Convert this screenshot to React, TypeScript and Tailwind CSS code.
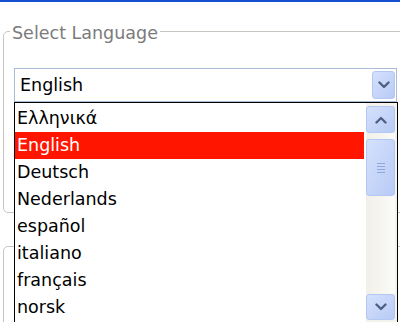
import React from 'react'

const languages = [
  'Ελληνικά',
  'English',
  'Deutsch',
  'Nederlands',
  'español',
  'italiano',
  'français',
  'norsk',
]

function Chevron({ up = false }: { up?: boolean }) {
  return (
    <svg width="12" height="8" viewBox="0 0 12 8" className="block">
      <polyline
        points={up ? '1.5,6.5 6,2 10.5,6.5' : '1.5,1.5 6,6 10.5,1.5'}
        fill="none"
        stroke="#4d6185"
        strokeWidth="2.4"
        strokeLinecap="round"
        strokeLinejoin="round"
      />
    </svg>
  )
}

function ScrollButton({ up = false, className = '' }: { up?: boolean; className?: string }) {
  return (
    <div
      className={`flex items-center justify-center rounded-[3px] border border-[#b3c7f2] bg-gradient-to-br from-[#d5e1fd] to-[#b8cbf5] ${className}`}
    >
      <Chevron up={up} />
    </div>
  )
}

export default function App() {
  return (
    <div className="relative w-[400px] h-[322px] overflow-hidden bg-white font-['DejaVu_Sans',sans-serif] text-[17.5px]">
      {/* window title bar edge */}
      <div className="h-[2px] bg-[#1550d0]" />

      {/* group box */}
      <fieldset className="mt-[17px] ml-[3px] w-[430px] border border-[#c6c6c0] rounded-[5px] pl-[10px] pb-[110px]">
        <legend className="-ml-[4px] px-[2px] pt-[4px] leading-[20px] text-[#7b7b7b]">Select Language</legend>
        <div className="mt-[25px] w-[383px] h-[34px] border border-[#a9bdd6] flex items-center justify-between">
          <span className="pl-[5px] leading-[32px] text-black">English</span>
          <ScrollButton className="w-[23px] h-[28px] mr-[1px]" />
        </div>
      </fieldset>

      <div className="mt-[33px] ml-[3px] w-[430px] h-[120px] border border-[#c6c6c0] rounded-[5px]" />

      {/* open dropdown list */}
      <div className="absolute left-[14px] top-[102px] w-[384px] h-[222px] border border-black bg-white flex">
        <ul className="flex-1 pt-[2px] pr-[2px]">
          {languages.map((lang) => (
            <li
              key={lang}
              className={`h-[27px] pl-[2px] leading-[27px] ${
                lang === 'English' ? 'bg-[#ff1500] text-white' : 'text-black'
              }`}
            >
              {lang}
            </li>
          ))}
        </ul>
        <div className="w-[31px] flex flex-col bg-[#f4f2ec] pr-[2px] pt-[3px] pb-[3px]">
          <ScrollButton up className="h-[27px]" />
          <div className="flex-1 pt-[6px] bg-gradient-to-r from-[#f1efe8] to-[#fbfbf8]">
            <div className="h-[57px] rounded-[3px] border border-[#b3c7f2] bg-gradient-to-br from-[#d5e1fd] to-[#b8cbf5] flex flex-col items-center justify-center gap-[2px]">
              <div className="w-[8px] h-[1px] bg-[#8fa7de]" />
              <div className="w-[8px] h-[1px] bg-[#8fa7de]" />
              <div className="w-[8px] h-[1px] bg-[#8fa7de]" />
              <div className="w-[8px] h-[1px] bg-[#8fa7de]" />
            </div>
          </div>
          <ScrollButton className="h-[26px]" />
        </div>
      </div>
    </div>
  )
}
